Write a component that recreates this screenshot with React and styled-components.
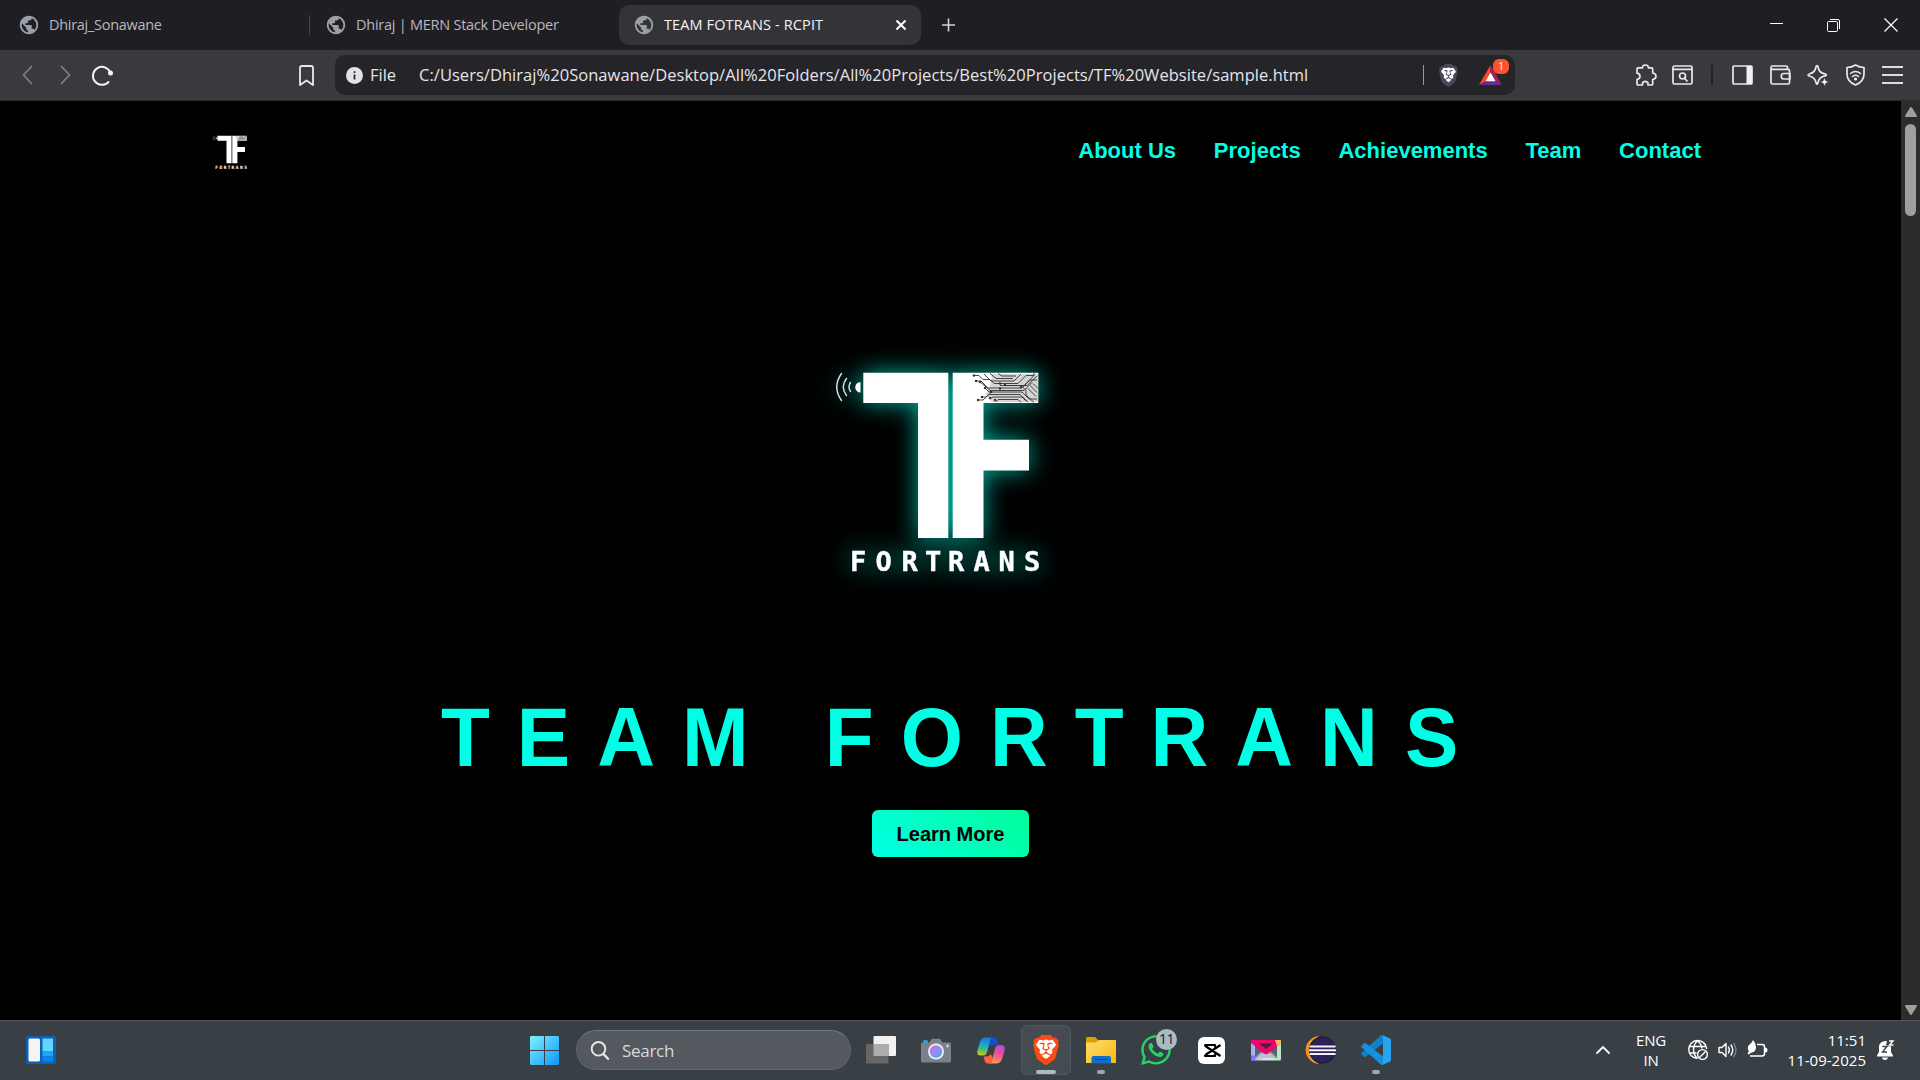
import React from "react";
import styled, { createGlobalStyle, css } from "styled-components";
import { MdPublic } from "react-icons/md";
import { FaWhatsapp } from "react-icons/fa";

const UI = `"Open Sans", "Noto Sans", sans-serif`;
const ARIAL = `"Liberation Sans", Arial, sans-serif`;
const CYAN = "#00ffe5";

const GlobalStyle = createGlobalStyle`
  *, *::before, *::after { box-sizing: border-box; }
  html, body { margin: 0; padding: 0; background: #000; overflow: hidden; }
  svg { display: block; flex: none; overflow: visible; }
`;

const Screen = styled.div`
  width: 1920px;
  height: 1080px;
  display: flex;
  flex-direction: column;
  overflow: hidden;
  background: #000;
  font-family: ${UI};
`;

/* ---------- browser chrome ---------- */

const TabStrip = styled.div`
  height: 50px;
  flex: none;
  display: flex;
  align-items: center;
  background: #1f1e24;
  padding-left: 4px;
`;

const Tab = styled.div`
  width: ${(p) => p.$width}px;
  height: 40px;
  display: flex;
  align-items: center;
  padding: 0 15px 0 16px;
  gap: 11px;
  border-radius: 10px;
  color: ${(p) => (p.$active ? "#f4f4f6" : "#b9b8bd")};
  ${(p) => p.$active && css`background: #343338;`}
`;

const TabTitle = styled.span`
  flex: 1;
  font-size: 14.5px;
  line-height: 20px;
  white-space: nowrap;
  letter-spacing: ${(p) => p.$ls}px;
`;

const TabDivider = styled.i`
  width: 1px;
  height: 20px;
  background: #46454b;
  margin-right: ${(p) => p.$after || 0}px;
`;

const WindowButtons = styled.div`
  margin-left: auto;
  padding-right: 22px;
  display: flex;
  align-items: center;
  gap: 43px;
`;

const NewTab = styled.div`
  margin-left: 20px;
`;

const Toolbar = styled.div`
  height: 51px;
  flex: none;
  display: flex;
  align-items: center;
  background: #3a393e;
  border-bottom: 1px solid #2c2b30;
`;

const Slot = styled.span`
  display: block;
  flex: none;
  margin-left: ${(p) => p.$gap || 0}px;
`;

const AddressBar = styled.div`
  width: 1180px;
  height: 40px;
  margin-left: 21px;
  padding-left: 11px;
  display: flex;
  align-items: center;
  border-radius: 10px;
  background: #252429;
  color: #e6e5ea;
  font-size: 16.5px;
`;

const AddressText = styled.span`
  margin-left: ${(p) => p.$gap}px;
  width: ${(p) => p.$width}px;
  line-height: 22px;
  white-space: nowrap;
  letter-spacing: ${(p) => p.$ls}px;
`;

const AddressRule = styled.i`
  width: 1px;
  height: 20px;
  margin-left: auto;
  background: #9a999e;
`;

const Rewards = styled.div`
  position: relative;
  margin: 0 13px 0 21px;
`;

const RewardsBadge = styled.span`
  position: absolute;
  left: 14px;
  top: -6px;
  width: 16px;
  height: 15px;
  border-radius: 6px;
  background: #fb542b;
  color: #fff;
  font-size: 10px;
  line-height: 15px;
  text-align: center;
`;

const ToolDivider = styled.i`
  width: 2px;
  height: 20px;
  margin: 0 19px 0 18px;
  background: #232227;
`;

/* ---------- page ---------- */

const Viewport = styled.div`
  height: 919px;
  flex: none;
  display: flex;
`;

const Page = styled.main`
  width: 1901px;
  display: flex;
  flex-direction: column;
  align-items: center;
  background: #000;
  font-family: ${ARIAL};
`;

const SiteHeader = styled.header`
  width: 100%;
  height: 102px;
  padding: 0 200px 0 207px;
  display: flex;
  align-items: center;
  justify-content: space-between;
`;

const SiteNav = styled.nav`
  display: flex;
  gap: 37.8px;
  margin-top: -2px;
`;

const NavLink = styled.a`
  color: ${CYAN};
  font-size: 22px;
  font-weight: 700;
  line-height: 26px;
`;

const Hero = styled.section`
  display: flex;
  flex-direction: column;
  align-items: center;
  padding-top: 117px;
`;

const HeroLogo = styled.div`
  filter: drop-shadow(0 0 12px rgba(0, 255, 229, 0.68));
`;

const HeroTitle = styled.h1`
  margin: 73px 0 0;
  padding-left: 25.2px;
  color: ${CYAN};
  font-size: 80px;
  line-height: 92px;
  font-weight: 700;
  letter-spacing: 27px;
  white-space: nowrap;
  transform: scaleY(1.04);
  transform-origin: 50% 73px;
`;

const LearnMore = styled.button`
  width: 157px;
  height: 47px;
  margin-top: 25px;
  padding: 0;
  border: 0;
  border-radius: 6px;
  background: linear-gradient(45deg, #00ffe5, #00ff99);
  color: #000;
  font: 700 20px/48px ${ARIAL};
`;

const ScrollTrack = styled.div`
  width: 19px;
  display: flex;
  flex-direction: column;
  align-items: center;
  padding: 6px 0 5px;
  background: #2c2c2c;
`;

const ScrollThumb = styled.div`
  width: 11px;
  height: 92px;
  margin: 7px 0 auto;
  border-radius: 6px;
  background: #9f9f9f;
`;

/* ---------- taskbar ---------- */

const Taskbar = styled.footer`
  height: 60px;
  flex: none;
  display: flex;
  align-items: center;
  padding-bottom: 1px;
  border-top: 1px solid #555b60;
  background: #383f45;
  color: #fff;
`;

const SearchBox = styled.div`
  width: 275px;
  height: 40px;
  margin: 0 5px 0 17px;
  padding-left: 14px;
  display: flex;
  align-items: center;
  gap: 13px;
  border: 1px solid #5f666a;
  border-top-color: #747a7e;
  border-radius: 20px;
  background: #53595e;
  color: #d8dadb;
  font-size: 17px;
  letter-spacing: -0.3px;
`;

const AppButton = styled.div`
  position: relative;
  width: 50px;
  height: 50px;
  margin-right: 5px;
  display: flex;
  align-items: center;
  justify-content: center;
  border-radius: 6px;
  border: 1px solid ${(p) => (p.$active ? "#51585d" : "transparent")};
  background: ${(p) => (p.$active ? "#454c51" : "transparent")};
`;

const RunningMark = styled.i`
  position: absolute;
  bottom: 0;
  left: 50%;
  width: ${(p) => (p.$active ? 20 : 8)}px;
  height: 4px;
  margin-left: ${(p) => (p.$active ? -10 : -4)}px;
  border-radius: 2px;
  background: ${(p) => (p.$active ? "#a9bcc4" : "#a3a6a9")};
`;

const CountBadge = styled.span`
  position: absolute;
  left: 24px;
  top: 3px;
  width: 21px;
  height: 21px;
  border-radius: 50%;
  background: #a9bcc2;
  color: #15191b;
  font-size: 14px;
  line-height: 20px;
  letter-spacing: -0.5px;
  text-align: center;
`;

const Tray = styled.div`
  margin-left: auto;
  padding-right: 26px;
  display: flex;
  align-items: center;
`;

const TrayText = styled.div`
  width: ${(p) => p.$width}px;
  margin-left: ${(p) => p.$gap}px;
  margin-top: -1px;
  font-size: 15px;
  line-height: 20px;
  letter-spacing: ${(p) => p.$ls || 0}px;
  text-align: ${(p) => p.$align};
  white-space: nowrap;
`;

/* ---------- drawings ---------- */

const Svg = ({ w, h, children, ...rest }) => (
  <svg width={w} height={h} viewBox={`0 0 ${w} ${h}`} fill="none" {...rest}>
    {children}
  </svg>
);

const FaviconBox = styled.span`
  display: block;
  margin: 0 -2px;
`;

const Favicon = () => (
  <FaviconBox>
    <MdPublic size={22} color="#9aa0a6" />
  </FaviconBox>
);

const traces = [
  "M974 375.500H979L983 379.500H990L994 383.500H1018L1026 375.500H1034",
  "M976 381H981L988 388H1022L1030 380H1037",
  "M984 374L991 381H1014L1021 374",
  "M990 373.500L996 378.500H1013",
  "M998 373.500L1002 376H1016",
  "M980 382L985 386L990 390.500H1024L1032 382.500",
  "M985 388L989 392H1022L1029 399H1037",
  "M978 400H983L990 393.500",
  "M982 397H986L989 394.500H1020L1028 402",
  "M990 399L993 397H1022L1026 401",
  "M996 402L998 399.500H1018L1021 402.500",
  "M1000 385.500H1024L1034 375.500V373",
  "M1004 385.500H1027L1037 376",
  "M1022 386.500L1026 390.500V395L1034 402.500",
  "M1028 388.500L1036 396.500",
  "M1030 385.500L1037 392.500",
  "M1033 383.500L1038 388.500",
];
const pads = [
  [974, 375.5], [976, 381], [980, 382], [978, 400], [982, 397], [985, 388],
  [991, 392], [1000, 383.5], [1005, 385], [1000, 388.5], [1021, 387], [990, 398], [995, 400],
];

const TeamLogo = ({ size }) => (
  <svg width={size} height={size} viewBox="801 320 300 300">
    <g fill="none" stroke="#d7dcdc" strokeWidth="1.500" strokeLinecap="round">
      <path d="M841.500 373.500Q832 387 841.500 400.500" />
      <path d="M846.500 378.500Q840 387 846.500 395.500" />
      <path d="M850.500 382.500Q847.500 387 850.500 391.500" />
    </g>
    <path d="M860.500 382A5.200 5.200 0 0 0 860.500 392.500Z" fill="#fff" />
    <path d="M863.300 372.700H948.300V538H918V403H863.300Z" fill="#fff" />
    <path d="M952.700 372.700H1038.300V403H983.500V439.700H1029V470.500H983.500V538H952.700Z" fill="#fff" />
    <path d="M992 374H1038V402H992L986 394L990 386Z" fill="#d4d4d4" />
    <g stroke="#333" strokeWidth="0.900" fill="none">
      {traces.map((d) => <path key={d} d={d} />)}
    </g>
    <g fill="#333">
      {pads.map(([x, y]) => <circle key={`${x}-${y}`} cx={x} cy={y} r="1.200" />)}
    </g>
    <text
      x="850 875.500 901.500 925 948 973.500 998.500 1024"
      y="570.700"
      fill="#fff"
      stroke="#fff"
      strokeWidth="0.400"
      fontFamily='"DejaVu Sans Mono", monospace'
      fontWeight="700"
      fontSize="27"
    >
      FORTRANS
    </text>
  </svg>
);

const stroke = { stroke: "#e9e8ec", strokeWidth: 1.7, strokeLinejoin: "round", strokeLinecap: "round" };

const SHIELD =
  "M15.68 0l2.096 2.38s1.84-.512 2.709.358c.868.87 1.584 1.638 1.584 1.638l-.562 1.381.715 2.047s-2.104 7.98-2.35 8.955c-.486 1.919-.818 2.66-2.198 3.633-1.38.972-3.884 2.66-4.293 2.916-.409.256-.92.692-1.38.692-.46 0-.97-.436-1.38-.692a185.796 185.796 0 01-4.293-2.916c-1.38-.973-1.712-1.714-2.197-3.633-.247-.975-2.351-8.955-2.351-8.955l.715-2.047-.562-1.381s.716-.768 1.585-1.638c.868-.87 2.708-.358 2.708-.358L8.321 0h7.36z";
const CHIN =
  "M12 14.936c-.14 0-1.038.317-1.758.69-.72.373-1.242.637-1.409.742-.167.104-.065.301.087.409.152.107 2.194 1.69 2.393 1.866.198.175.489.464.687.464.198 0 .49-.29.688-.464.198-.175 2.24-1.759 2.392-1.866.152-.108.254-.305.087-.41-.167-.104-.689-.368-1.41-.741-.72-.373-1.617-.69-1.757-.69z";
const MANE =
  "M12 3.658s-.409.001-1.022.206-1.278.46-1.584.46c-.307 0-2.581-.434-2.581-.434S4.119 7.152 4.119 7.849c0 .697.339.881.68 1.243l2.02 2.149c.192.203.59.511.356 1.066-.235.555-.58 1.26-.196 1.977.384.716 1.042 1.194 1.464 1.115.421-.08 1.412-.598 1.776-.834.364-.237 1.518-1.19 1.518-1.554 0-.365-1.193-1.02-1.413-1.168-.22-.15-1.226-.725-1.247-.95-.02-.227-.012-.293.284-.851.297-.559.831-1.304.742-1.8-.089-.495-.95-.753-1.565-.986-.615-.232-1.799-.671-1.947-.74-.148-.068-.11-.133.339-.175.448-.043 1.719-.212 2.292-.052.573.16 1.552.403 1.632.532.079.13.149.134.067.579-.081.445-.5 2.581-.541 2.96-.04.38-.12.63.288.724.409.094 1.097.256 1.333.256s.924-.162 1.333-.256c.408-.093.329-.344.288-.723-.04-.38-.46-2.516-.541-2.961-.082-.445-.012-.45.067-.579.08-.129 1.059-.372 1.632-.532.573-.16 1.845.009 2.292.052.449.042.487.107.339.175-.148.069-1.332.508-1.947.74-.615.233-1.476.49-1.565.986-.09.496.445 1.241.742 1.8.297.558.304.624.284.85-.02.226-1.026.802-1.247.95-.22.15-1.413.804-1.413 1.169 0 .364 1.154 1.317 1.518 1.554.364.236 1.355.755 1.776.834.422.079 1.08-.4 1.464-1.115.384-.716.039-1.422-.195-1.977-.235-.555.163-.863.355-1.066l2.02-2.15c.341-.361.68-.545.68-1.242 0-.697-2.695-3.96-2.695-3.96s-2.274.436-2.58.436c-.307 0-.972-.256-1.585-.461-.613-.205-1.022-.206-1.022-.206z";

const BraveMark = ({ width, height, shield, face }) => (
  <svg width={width} height={height} viewBox="1.700 0 20.600 24" preserveAspectRatio="none">
    <path d={SHIELD} fill={shield} />
    <path d={MANE} fill={face} />
    <path d={CHIN} fill={face} />
  </svg>
);

const Widgets = () => (
  <Svg w={30} h={28}>
    <rect width="30" height="28" rx="2" fill="#0b62b4" />
    <rect x="2.500" y="2.500" width="11.500" height="23" rx="1.500" fill="#f4f5f7" />
    <path d="M16.500 2.500H27V15.500H16.500Z" fill="#63d4ff" />
    <path d="M16.500 16H27V20.500H16.500Z" fill="#1ea4fb" />
    <path d="M16.500 21H27V25.500H16.500Z" fill="#0684f0" />
  </Svg>
);

const StartLogo = () => (
  <Svg w={29} h={29}>
    <defs>
      <linearGradient id="start" x1="0" y1="0" x2="29" y2="29" gradientUnits="userSpaceOnUse">
        <stop stopColor="#80f3ff" /><stop offset="0.500" stopColor="#45c4fd" /><stop offset="1" stopColor="#0c95fc" />
      </linearGradient>
    </defs>
    <path d="M1 0H14V14H0V1ZM15 0H28L29 1V14H15ZM0 15H14V29H1L0 28ZM15 15H29V28L28 29H15Z" fill="url(#start)" />
  </Svg>
);

const TaskView = () => (
  <Svg w={30} h={28}>
    <rect x="7.500" width="22.500" height="20" rx="1" fill="#f1f1f1" />
    <rect y="8" width="22.500" height="19.500" rx="1" fill="#666" />
    <rect x="7.500" y="8" width="15" height="12" fill="#adadad" />
  </Svg>
);

const CameraApp = () => (
  <Svg w={30} h={25}>
    <defs>
      <linearGradient id="lens" x1="10" y1="7" x2="20" y2="20" gradientUnits="userSpaceOnUse">
        <stop stopColor="#c06be8" /><stop offset="0.500" stopColor="#9b8bf3" /><stop offset="1" stopColor="#28b5ee" />
      </linearGradient>
    </defs>
    <rect x="2" y="2" width="5" height="5" rx="1.500" fill="#1ba6e8" />
    <path d="M1 4.500H8L11 0.800H19L21.500 4.500H29L30 5.500V23.500L29 24.500H1L0 23.500V5.500Z" fill="#79828a" />
    <circle cx="15" cy="13.500" r="8" fill="#f4f2f6" />
    <circle cx="15" cy="13.500" r="6.300" fill="url(#lens)" />
    <path d="M26.500 6.500V9.500M25 8H28" stroke="#dfe3e6" />
  </Svg>
);

const Copilot = () => (
  <Svg w={28} h={27}>
    <defs>
      <linearGradient id="cpA" x1="10" y1="0" x2="6" y2="20" gradientUnits="userSpaceOnUse">
        <stop stopColor="#1579dd" /><stop offset="0.400" stopColor="#16a6d4" /><stop offset="0.700" stopColor="#5fbe5e" /><stop offset="1" stopColor="#f2c80f" />
      </linearGradient>
      <linearGradient id="cpB" x1="24" y1="7" x2="17" y2="27" gradientUnits="userSpaceOnUse">
        <stop stopColor="#a44de8" /><stop offset="0.500" stopColor="#ee5190" /><stop offset="1" stopColor="#fba24a" />
      </linearGradient>
    </defs>
    <path d="M17 0.500H8.500Q4.500 0.500 3 5L0.500 13Q-1 18.500 4 18.500H6Q9 18.500 10 15L13 5Q14.300 0.500 17 0.500Z" fill="url(#cpA)" />
    <path d="M14 0.500H17.500Q19.800 0.500 20.500 3L21.500 7.500H18Q15.500 7.500 14.500 10L12.600 6.500Z" fill="#154fcd" />
    <path d="M11 26.500H19Q23.500 26.500 25 22L27.500 14Q29 8 24 8H22Q19 8 18 11.500L15.500 21Q14.300 26.500 11 26.500Z" fill="url(#cpB)" />
    <path d="M15 26.500H10.500Q8.500 26.500 7.800 24L6.500 19.500H9.500Q12.500 19.500 13.500 17L15.500 20Z" fill="#f9643c" />
  </Svg>
);

const Folder = () => (
  <Svg w={30} h={27}>
    <defs>
      <linearGradient id="folder" x1="0" y1="3" x2="20" y2="27" gradientUnits="userSpaceOnUse">
        <stop stopColor="#ffdd6e" /><stop offset="1" stopColor="#fbbd1e" />
      </linearGradient>
    </defs>
    <path d="M0 1.500Q0 0 1.500 0H9L12.500 3.500V8H0Z" fill="#dd9d05" />
    <path d="M0 5.500H9.500L13 3H30V26H0Z" fill="url(#folder)" />
    <path d="M5.500 26.500V21Q5.500 19 7.500 19H23Q25 19 25 21V26.500Z" fill="#0c6fca" />
    <path d="M9 22.500H22" stroke="#07468e" />
  </Svg>
);

const CapCut = () => (
  <Svg w={27} h={27}>
    <rect width="27" height="27" rx="6" fill="#fff" />
    <path d="M22.500 8L9.500 16.500Q6 19 7.500 19H17V16.800M22.500 19L9.500 10.500Q6 8 7.500 8H17V10.200" stroke="#000" strokeWidth="2.200" strokeLinejoin="round" />
  </Svg>
);

const MailApp = () => (
  <Svg w={30} h={21}>
    <defs>
      <linearGradient id="mail" x1="0" y1="0" x2="30" y2="0" gradientUnits="userSpaceOnUse">
        <stop stopColor="#a6a5f4" /><stop offset="0.500" stopColor="#dfe6ef" /><stop offset="1" stopColor="#b5e6bd" />
      </linearGradient>
    </defs>
    <rect width="30" height="20.500" rx="1" fill="url(#mail)" />
    <path d="M4 5V17L11 11ZM26 5V17L19 11Z" fill="#55616c" />
    <path d="M4 18L12 11H18L26 18Z" fill="#b9c2ce" />
    <path d="M4 18L11.500 11.500M26 18L18.500 11.500" stroke="#5c6872" />
    <path d="M0 0H30V3L18 13Q15 15.500 12 13L0 3Z" fill="#f0056d" />
    <path d="M8 3.500H22L15 9Z" fill="#4c2232" />
    <path d="M24 0H30V3L26 6.500Z" fill="#ffb45f" />
    <rect y="15.500" width="4" height="5" fill="#7a74ff" />
  </Svg>
);

const Eclipse = () => (
  <Svg w={30} h={28}>
    <path d="M12 0.500A13.600 13.600 0 0 0 12 27.500A18 18 0 0 1 12 0.500Z" fill="#f7941e" stroke="#f7941e" />
    <circle cx="16.500" cy="14" r="13.300" fill="#2c2255" stroke="#191b33" />
    <path d="M3.500 10.500H29.600M3 14.200H30M3.500 18H29.600" stroke="#f3f2f8" strokeWidth="2.100" />
  </Svg>
);

const VsCode = () => (
  <Svg w={30} h={30}>
    <path d="M22 0.300L29 3.500Q30 4 30 5V25Q30 26 29 26.500L22 29.700Z" fill="#29a4f2" />
    <path d="M22 0.300V8.500L4.800 21.700Q3.800 22.400 2.900 21.700L0.600 19.600Q-0.300 18.600 0.600 17.700L19.500 0.700Q20.700 -0.200 22 0.300Z" fill="#0f7fc9" />
    <path d="M22 29.700V21.500L4.800 8.300Q3.800 7.600 2.900 8.300L0.600 10.400Q-0.300 11.400 0.600 12.300L19.500 29.300Q20.700 30.200 22 29.700Z" fill="#1490dc" />
  </Svg>
);

const tabs = [
  { title: "Dhiraj_Sonawane", width: 305, ls: -0.29, divider: 2 },
  { title: "Dhiraj | MERN Stack Developer", width: 308, ls: -0.25 },
  { title: "TEAM FOTRANS - RCPIT", width: 302, ls: 0.12, active: true },
];

const apps = [
  { id: "view", icon: <TaskView /> },
  { id: "camera", icon: <CameraApp /> },
  { id: "copilot", icon: <Copilot /> },
  { id: "brave", icon: <BraveMark width={26} height={30} shield="#fb4b12" face="#fff" />, active: true, running: true },
  { id: "files", icon: <Folder />, running: true },
  { id: "whatsapp", icon: <FaWhatsapp size={34} color="#25d366" />, count: 11 },
  { id: "capcut", icon: <CapCut /> },
  { id: "mail", icon: <MailApp /> },
  { id: "eclipse", icon: <Eclipse /> },
  { id: "code", icon: <VsCode />, running: true },
];

export default function App() {
  return (
    <Screen>
      <GlobalStyle />
      <TabStrip>
        {tabs.map((t) => (
          <React.Fragment key={t.title}>
            <Tab $width={t.width} $active={t.active}>
              <Favicon />
              <TabTitle $ls={t.ls}>{t.title}</TabTitle>
              {t.active && (
                <Svg w={10} h={10}><path d="M0.500 0.500L9.500 9.500M9.500 0.500L0.500 9.500" stroke="#fff" strokeWidth="2" /></Svg>
              )}
            </Tab>
            {t.divider && <TabDivider $after={1} />}
          </React.Fragment>
        ))}
        <NewTab>
          <Svg w={15} h={14}><path d="M7.500 0.500V13.500M1 7H14" stroke="#d5d4d9" strokeWidth="1.600" /></Svg>
        </NewTab>
        <WindowButtons>
          <Svg w={13} h={14}><path d="M-1 5.500H12" stroke="#fff" /></Svg>
          <Svg w={14} h={13}>
            <path d="M0.500 3.500Q0.500 2.500 1.500 2.500H9.500Q10.500 2.500 10.500 3.500V11.500Q10.500 12.500 9.500 12.500H1.500Q0.500 12.500 0.500 11.500ZM3 0.500H11Q12.500 0.500 12.500 2V10" stroke="#fff" />
          </Svg>
          <Svg w={14} h={14}><path d="M0.500 0.500L13.500 13.500M13.500 0.500L0.500 13.500" stroke="#fff" strokeWidth="1.200" /></Svg>
        </WindowButtons>
      </TabStrip>

      <Toolbar>
        <Slot $gap={22}><Svg w={11} h={20}><path d="M10 1L1.500 10L10 19" stroke="#808085" strokeWidth="1.700" /></Svg></Slot>
        <Slot $gap={27}><Svg w={11} h={20}><path d="M1 1L9.500 10L1 19" stroke="#808085" strokeWidth="1.700" /></Svg></Slot>
        <Slot $gap={21}>
          <Svg w={21} h={20}>
            <path d="M16.500 17A9 9 0 1 1 18.300 7.500" stroke="#f2f1f5" strokeWidth="2" strokeLinecap="round" />
            <circle cx="18.500" cy="8" r="2.500" fill="#f2f1f5" />
          </Svg>
        </Slot>
        <Slot $gap={186}>
          <Svg w={15} h={21}><path d="M1 3Q1 1 3 1H12Q14 1 14 3V20L7.500 15.500L1 20Z" {...stroke} strokeWidth={1.8} /></Svg>
        </Slot>
        <AddressBar>
          <Svg w={17} h={17}>
            <circle cx="8.500" cy="8.500" r="8.500" fill="#e3e2e7" />
            <path d="M8.500 7.500V12.500M8.500 4.300V6" stroke="#2b2a2f" strokeWidth="1.800" />
          </Svg>
          <AddressText $gap={7} $width={26} $ls={0}>File</AddressText>
          <AddressText $gap={23} $width={890} $ls={0.04}>
            C:/Users/Dhiraj%20Sonawane/Desktop/All%20Folders/All%20Projects/Best%20Projects/TF%20Website/sample.html
          </AddressText>
          <AddressRule />
          <Slot $gap={15}><BraveMark width={19} height={23} shield="#474958" face="#fff" /></Slot>
          <Rewards>
            <Svg w={23} h={20}>
              <path d="M11.500 0L0 20L7 16L11.500 8.500Z" fill="#ff4724" />
              <path d="M0 20H23L16 16H7Z" fill="#662d91" />
              <path d="M11.500 0L23 20L16 16L11.500 8.500Z" fill="#9e1f63" />
              <path d="M11.500 7.500L16.500 16.200H6.500Z" fill="#fff" />
            </Svg>
            <RewardsBadge>1</RewardsBadge>
          </Rewards>
        </AddressBar>

        <Slot $gap={121}>
          <Svg w={21} h={22}>
            <path d="M1 4.800Q1 3.800 2 3.800H6.500Q6.500 1 9.500 1Q12.500 1 12.500 3.800H15.500Q16.700 3.800 16.700 5V9Q20 9.500 20 12.300Q20 15 16.700 15.500V20Q16.700 21 15.500 21H12V19.500Q11.500 17.300 9.200 17.300Q7 17.300 6.500 19.500V21H2Q1 21 1 20V15.500Q4 15 4 12.300Q4 9.800 1 9.200Z" {...stroke} />
          </Svg>
        </Slot>
        <Slot $gap={15}>
          <Svg w={21} h={20}>
            <rect x="1" y="1" width="19" height="18" rx="1.500" {...stroke} />
            <path d="M1 4.300H20M12.700 13.500L15 15.800" {...stroke} />
            <circle cx="10.500" cy="11" r="3" {...stroke} />
          </Svg>
        </Slot>
        <ToolDivider />
        <Svg w={21} h={20}>
          <rect x="1" y="1" width="19" height="18" rx="1" {...stroke} />
          <path d="M14.500 1H20V19H14.500Z" fill="#f1f0f4" />
        </Svg>
        <Slot $gap={17}>
          <Svg w={21} h={20}>
            <path d="M17.500 4.300V2.300Q17.500 1 16 1H2.500Q1 1 1 2.500V17.500Q1 19 2.500 19H18Q19.500 19 19.500 17.500V5.800Q19.500 4.300 18 4.300H1M20 8.500H13.500Q11.300 8.500 11.300 11.300Q11.300 14 13.500 14H20Z" {...stroke} />
          </Svg>
        </Slot>
        <Slot $gap={16}>
          <Svg w={22} h={22}>
            <path d="M10 1.500Q10.800 1.500 11 3Q12 8.500 17 9.700Q19.500 10.300 19.500 11Q19.500 11.600 17 12.200Q12 13.500 11 18.500Q10.700 20.200 10 20.200Q9.300 20.200 9 18.500Q8 13.500 3 12.200Q1 11.700 1 11Q1 10.300 3 9.700Q8 8.500 9 3Q9.200 1.500 10 1.500Z" {...stroke} />
            <path d="M17.500 13.500L18.800 16.700L22 18L18.800 19.300L17.500 22.500L16.200 19.300L13 18L16.200 16.700Z" fill="#f1f0f4" stroke="#3a393e" strokeWidth="0.600" />
          </Svg>
        </Slot>
        <Slot $gap={17}>
          <Svg w={19} h={22}>
            <path d="M9.500 1Q13.500 3.500 18 3.500V10Q18 17.500 9.500 21Q1 17.500 1 10V3.500Q5.500 3.500 9.500 1Z" {...stroke} />
            <path d="M4.500 9.500Q9.500 5.500 14.500 9.500M6.500 12.500Q9.500 10 12.500 12.500" {...stroke} strokeWidth={1.6} />
            <circle cx="9.500" cy="15" r="1.600" fill="#f1f0f4" />
          </Svg>
        </Slot>
        <Slot $gap={17}>
          <Svg w={21} h={18}><path d="M0 1H21M0 9H21M0 17H21" stroke="#dddce0" strokeWidth="1.800" /></Svg>
        </Slot>
      </Toolbar>

      <Viewport>
        <Page>
          <SiteHeader>
            <TeamLogo size={50} />
            <SiteNav>
              {["About Us", "Projects", "Achievements", "Team", "Contact"].map((n) => (
                <NavLink key={n}>{n}</NavLink>
              ))}
            </SiteNav>
          </SiteHeader>
          <Hero>
            <HeroLogo><TeamLogo size={300} /></HeroLogo>
            <HeroTitle>TEAM FORTRANS</HeroTitle>
            <LearnMore>Learn More</LearnMore>
          </Hero>
        </Page>
        <ScrollTrack>
          <Svg w={12} h={10}><path d="M6 1L11 9H1Z" fill="#9f9f9f" stroke="#9f9f9f" strokeWidth="2" strokeLinejoin="round" /></Svg>
          <ScrollThumb />
          <Svg w={12} h={10}><path d="M6 9L11 1H1Z" fill="#9f9f9f" stroke="#9f9f9f" strokeWidth="2" strokeLinejoin="round" /></Svg>
        </ScrollTrack>
      </Viewport>

      <Taskbar>
        <Slot $gap={26}><Widgets /></Slot>
        <Slot $gap={474}><StartLogo /></Slot>
        <SearchBox>
          <Svg w={18} h={19}>
            <circle cx="7.500" cy="7.800" r="6.800" stroke="#e5e7e8" strokeWidth="1.900" />
            <path d="M12.500 13L17 17.800" stroke="#e5e7e8" strokeWidth="2.400" strokeLinecap="round" />
          </Svg>
          Search
        </SearchBox>
        {apps.map((a) => (
          <AppButton key={a.id} $active={a.active}>
            {a.icon}
            {a.count && <CountBadge>{a.count}</CountBadge>}
            {a.running && <RunningMark $active={a.active} />}
          </AppButton>
        ))}
        <Tray>
          <Svg w={14} h={8}><path d="M1 7L7 1L13 7" stroke="#fff" strokeWidth="1.800" strokeLinecap="round" /></Svg>
          <TrayText $gap={21} $width={40} $align="center" $ls={-0.2}>ENG<br />IN</TrayText>
          <Slot $gap={17}>
            <Svg w={20} h={20}>
              <path d="M9.500 18.500A9 9 0 1 1 18.700 9M9.500 18.500Q5.500 15 5.500 9.800Q5.500 4 9.700 1Q13.500 4 13.900 8.500M1.500 6.500H18M1.500 13H8.500" stroke="#fff" strokeWidth="1.400" />
              <circle cx="14.500" cy="14.500" r="4.900" stroke="#fff" strokeWidth="1.400" />
              <path d="M11.500 17.500L17.500 11.500" stroke="#fff" strokeWidth="1.400" />
            </Svg>
          </Slot>
          <Slot $gap={10}>
            <Svg w={20} h={16}>
              <path d="M1 5.500H4L8 1.500V14.500L4 10.500H1Z" stroke="#fff" strokeWidth="1.400" strokeLinejoin="round" />
              <path d="M10.500 5Q12.300 8 10.500 11M13 3Q16.500 8 13 13" stroke="#fff" strokeWidth="1.400" strokeLinecap="round" />
              <path d="M15.500 1Q20.500 8 15.500 15" stroke="#7c8287" strokeWidth="1.400" />
            </Svg>
          </Slot>
          <Slot $gap={9}>
            <Svg w={21} h={18}>
              <path d="M10 3.500H15Q17.500 3.500 17.500 6V12.500Q17.500 15 15 15H3" stroke="#fff" strokeWidth="1.500" />
              <path d="M18 6.500Q20.500 6.500 20.500 9Q20.500 11.500 18 11.500Z" fill="#fff" />
              <path d="M6 -1Q9 2 9 6Q9 11 4.500 11.500L1.500 13.500L0.500 12L2 10.500Q-0.500 7 2 4Q4.500 2.500 6 -1Z" fill="#fff" />
            </Svg>
          </Slot>
          <TrayText $gap={16} $width={82} $align="right" $ls={0.02}>11:51<br />11-09-2025</TrayText>
          <Slot $gap={11}>
            <Svg w={17} h={20}>
              <path d="M10 1Q2 0.500 2 7.500V12L0 15.500V16.500H16V15.500L14 12V5H9Z" fill="#fff" />
              <path d="M5 17.500H11Q10.500 20 8 20Q5.500 20 5 17.500Z" fill="#fff" />
              <path d="M5.500 6.500H10L5.500 12H10" stroke="#383f45" strokeWidth="1.300" />
              <path d="M12 1H16L12.500 5H16.500" stroke="#383f45" strokeWidth="2.600" />
              <path d="M12 1H16L12.500 5H16.500" stroke="#fff" strokeWidth="1.400" />
            </Svg>
          </Slot>
        </Tray>
      </Taskbar>
    </Screen>
  );
}
